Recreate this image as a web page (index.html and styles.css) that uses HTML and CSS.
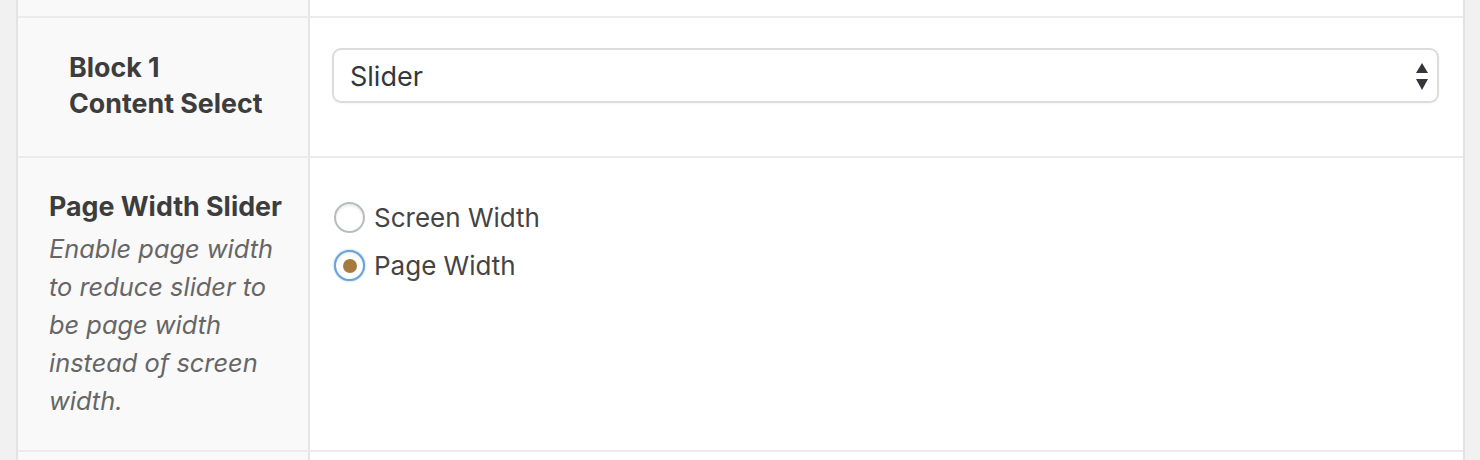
FILE: index.html
```html
<!DOCTYPE html>
<html>
<head>
<meta charset="utf-8">
<link rel="stylesheet" href="styles.css">
</head>
<body>
<div class="table">
  <div class="row row-top">
    <div class="label"></div>
    <div class="field"></div>
  </div>
  <div class="row row-select">
    <div class="label label-center">
      <div class="title">Block 1<br>Content Select</div>
    </div>
    <div class="field">
      <div class="select">
        <span class="select-value">Slider</span>
        <svg class="arrows" width="12" height="27" viewBox="0 0 12 27">
          <path d="M6 0 L12 10 L0 10 Z" fill="#32373c"/>
          <path d="M0 16 L12 16 L6 27 Z" fill="#32373c"/>
        </svg>
      </div>
    </div>
  </div>
  <div class="row row-radio">
    <div class="label label-top">
      <div class="title">Page Width Slider</div>
      <div class="desc">Enable page width<br>to reduce slider to<br>be page width<br>instead of screen<br>width.</div>
    </div>
    <div class="field field-radios">
      <div class="radio-item">
        <span class="radio"></span>
        <span class="radio-label">Screen Width</span>
      </div>
      <div class="radio-item">
        <span class="radio checked"><span class="dot"></span></span>
        <span class="radio-label">Page Width</span>
      </div>
    </div>
  </div>
  <div class="row row-bottom">
    <div class="label"></div>
    <div class="field"></div>
  </div>
</div>
</body>
</html>
```

FILE: styles.css
```css
html, body {
  margin: 0;
  padding: 0;
  background: #f1f1f1;
  font-family: Inter, "Liberation Sans", sans-serif;
  color: #444;
}
.table {
  margin: 0 15px 0 16px;
  border-left: 2px solid #e3e3e3;
  border-right: 2px solid #e3e3e3;
}
.row {
  display: grid;
  grid-template-columns: 292px 1fr;
  border-bottom: 2px solid #ebebeb;
}
.label {
  background: #f9f9f9;
  border-right: 2px solid #e6e6e6;
}
.field {
  background: #fff;
}
.row-top { height: 16px; }
.row-select { height: 138px; }
.row-radio { height: 292px; }
.row-bottom { height: 8px; border-bottom: none; }

.title {
  font-weight: 700;
  font-size: 26.8px;
  line-height: 36px;
  color: #3d3d3d;
}
.label-center {
  display: flex;
  align-items: center;
  padding-left: 51px;
  padding-bottom: 4px;
}
.label-top {
  padding: 30px 0 0 31px;
}
.desc {
  font-style: italic;
  font-size: 25.4px;
  line-height: 38px;
  color: #666;
  margin-top: 6px;
}
.select {
  margin: 30px 0 0 22px;
  width: 1107px;
  height: 55px;
  box-sizing: border-box;
  border: 2px solid #dcdcdc;
  border-radius: 9px;
  box-shadow: 0 1px 2px rgba(0,0,0,0.04);
  display: flex;
  align-items: center;
  justify-content: space-between;
  padding: 0 9px 0 16px;
}
.select-value {
  font-size: 27px;
  color: #32373c;
  padding-top: 2px;
}
.arrows { display: block; margin-top: 1px; }

.field-radios {
  padding: 44px 0 0 24px;
}
.radio-item {
  display: flex;
  align-items: center;
  height: 31px;
  margin-bottom: 17px;
}
.radio {
  box-sizing: border-box;
  width: 31px;
  height: 31px;
  border-radius: 50%;
  border: 2px solid #b8bcc0;
  background: #fff;
  box-shadow: inset 0 2px 3px rgba(0,0,0,0.08);
  display: flex;
  align-items: center;
  justify-content: center;
  margin-right: 9px;
}
.radio.checked {
  border-color: #6aa3da;
  box-shadow: 0 0 2px rgba(30,140,190,0.6), inset 0 2px 3px rgba(0,0,0,0.06);
}
.dot {
  width: 14px;
  height: 14px;
  border-radius: 50%;
  background: #a47b3c;
}
.radio-label {
  font-size: 26px;
  color: #444;
}
```
